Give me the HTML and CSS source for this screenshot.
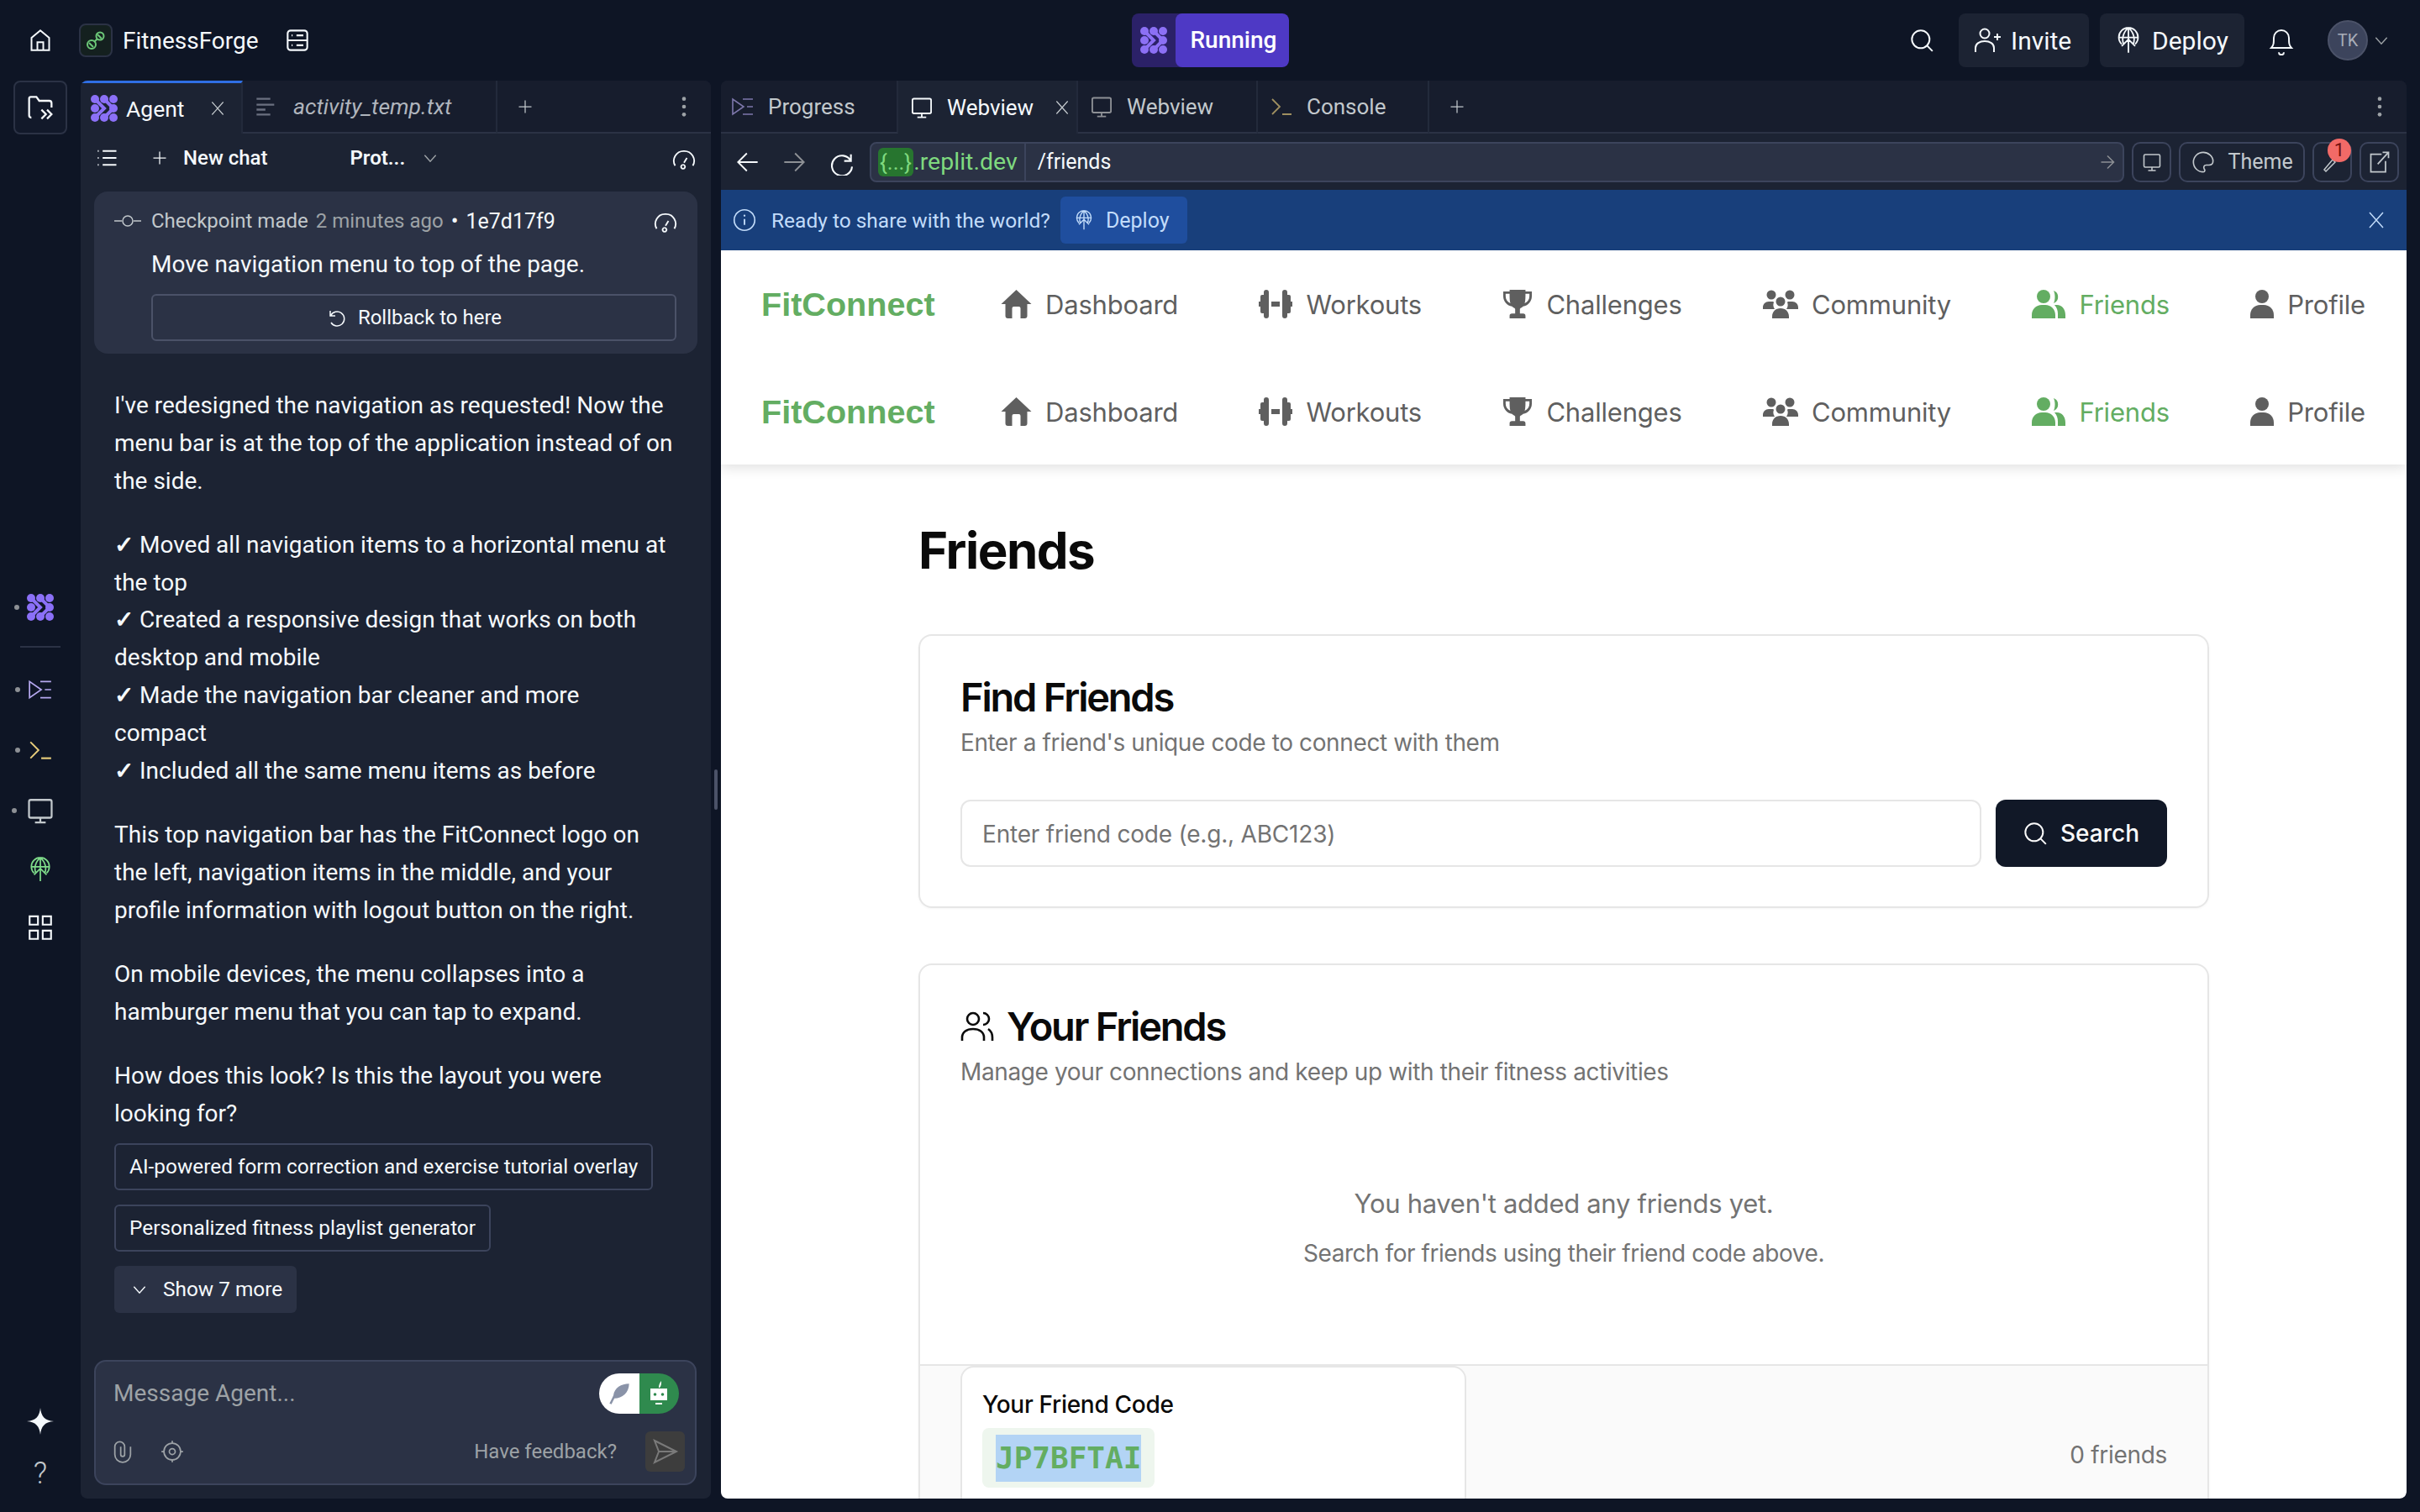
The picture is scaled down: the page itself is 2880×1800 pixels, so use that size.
FILE: index.html
```html
<!DOCTYPE html>
<html lang="en">
<head>
    <meta charset="UTF-8">
    <title>FitnessForge</title>
    <link rel="stylesheet" href="styles.css">
</head>
<body>
    <!-- shared icons -->
    <svg class="defs" xmlns="http://www.w3.org/2000/svg">
        <symbol id="i-agent" viewBox="0 0 32 32">
            <g fill="currentColor"><circle cx="5" cy="5" r="5"/><circle cx="16" cy="5" r="5"/><circle cx="27" cy="5" r="5"/><circle cx="5" cy="16" r="5"/><circle cx="27" cy="16" r="5"/><circle cx="5" cy="27" r="5"/><circle cx="16" cy="27" r="5"/><circle cx="27" cy="27" r="5"/></g>
            <path d="M5 5l11 11L5 27M16 5l11 11-11 11" fill="none" stroke="currentColor" stroke-width="4"/>
        </symbol>
        <symbol id="i-x" viewBox="0 0 24 24"><path d="M4 3l16 18M20 3L4 21" fill="none" stroke="currentColor" stroke-width="1.500"/></symbol>
        <symbol id="i-plus" viewBox="0 0 24 24"><path d="M12 3v18M3 12h18" fill="none" stroke="currentColor" stroke-width="1.500"/></symbol>
        <symbol id="i-dots" viewBox="0 0 24 24"><g fill="currentColor"><circle cx="12" cy="4" r="2"/><circle cx="12" cy="12" r="2"/><circle cx="12" cy="20" r="2"/></g></symbol>
        <symbol id="i-chev" viewBox="0 0 24 24"><path d="M4 8l8 9 8-9" fill="none" stroke="currentColor" stroke-width="1.700"/></symbol>
        <symbol id="i-gauge" viewBox="0 0 24 24"><path d="M3 20A10 10 0 0 1 12 5a10 10 0 0 1 9 15M11 19a2 2 0 1 0 .1 0M12 17l3-5" fill="none" stroke="currentColor" stroke-width="1.600"/></symbol>
        <symbol id="i-monitor" viewBox="0 0 24 24"><path d="M4 3h16a1.500 1.500 0 0 1 1.500 1.500v12A1.500 1.500 0 0 1 20 18H4a1.500 1.500 0 0 1-1.500-1.500v-12A1.500 1.500 0 0 1 4 3zM12 18v4M7.500 22h9" fill="none" stroke="currentColor" stroke-width="1.600"/></symbol>
        <symbol id="i-progress" viewBox="0 0 28 24"><path d="M2 3v18l13-9zM14 3h12M19 12h7M14 21h12" fill="none" stroke="currentColor" stroke-width="1.600"/></symbol>
        <symbol id="i-prompt" viewBox="0 0 28 24"><path d="M3 3l9 9-9 9" fill="none" stroke="#e8cd7c" stroke-width="1.800"/><path d="M15 21h11" stroke="#e8cd7c" stroke-width="2"/></symbol>
        <symbol id="i-globe" viewBox="0 0 24 28"><path d="M5 18A10 10 0 1 1 19 18M2 11h20M12 1v26M7 18c-2-5-1-12 5-17 6 5 7 12 5 17M5 20l7-7 7 7" fill="none" stroke="currentColor" stroke-width="1.600"/></symbol>
        <symbol id="i-search" viewBox="0 0 24 24"><circle cx="11" cy="11" r="9" fill="none" stroke="currentColor" stroke-width="1.700"/><path d="M17.500 17.500L23 23" stroke="currentColor" stroke-width="1.700"/></symbol>
        <symbol id="i-url-arrow" viewBox="0 0 24 24"><path d="M3 12h17M12 3l9 9-9 9" fill="none" stroke="currentColor" stroke-width="1.800"/></symbol>
        <symbol id="i-home" viewBox="0 0 36 34"><path fill="currentColor" d="M18 0l18 17h-5v14a3 3 0 0 1-3 3h-5V22a2 2 0 0 0-2-2h-6a2 2 0 0 0-2 2v12H8a3 3 0 0 1-3-3V17H0z"/></symbol>
        <symbol id="i-dumb" viewBox="0 0 40 32"><path fill="currentColor" d="M6 2a3 3 0 0 1 6 0v28a3 3 0 0 1-6 0v-3H4a2 2 0 0 1-2-2v-6H0v-6h2V7a2 2 0 0 1 2-2h2zM34 2a3 3 0 0 0-6 0v28a3 3 0 0 0 6 0v-3h2a2 2 0 0 0 2-2v-6h2v-6h-2V7a2 2 0 0 0-2-2h-2zM15 13h10v6H15z"/></symbol>
        <symbol id="i-cup" viewBox="0 0 36 36"><path fill="currentColor" d="M8 0h20v2h8v6c0 7-5 12-11 13-1 1-3 2-4 3v6h4c2 0 3 1 3 3v3H8v-3c0-2 1-3 3-3h4v-6c-1-1-3-2-4-3C5 20 0 15 0 8V2h8zM3 5v3c0 4 2 7 6 9-1-3-1-8-1-12zM33 5h-5c0 4 0 9-1 12 4-2 6-5 6-9z"/></symbol>
        <symbol id="i-group" viewBox="0 0 42 34"><g fill="currentColor"><circle cx="10" cy="6" r="5.500"/><circle cx="32" cy="6" r="5.500"/><circle cx="21" cy="14" r="5.500"/><path d="M0 21c0-4 3-7 7-7h4c1 0 2 .3 2 1-1 2-1 5 1 8H0zM42 21c0-4-3-7-7-7h-4c-1 0-2 .3-2 1 1 2 1 5-1 8h14zM11 32c0-6 4-10 10-10s10 4 10 10v2H11z"/></g></symbol>
        <symbol id="i-friends" viewBox="0 0 40 34"><g fill="currentColor"><circle cx="14" cy="8" r="8"/><path d="M26 1a8 8 0 0 1 0 15c2-4 2-11 0-15z"/><path d="M0 30c0-7 5-12 12-12h4c7 0 12 5 12 12v4H0zM30 18c6 0 10 5 10 12v4h-9v-5c0-4-1-8-4-11z"/></g></symbol>
        <symbol id="i-user" viewBox="0 0 28 34"><g fill="currentColor"><circle cx="14" cy="8" r="8"/><path d="M0 30c0-7 5-12 12-12h4c7 0 12 5 12 12v4H0z"/></g></symbol>
    </svg>

    <header class="topbar">
        <div class="top-left">
            <svg class="ico-28 home-ico" viewBox="0 0 24 24"><path d="M3 22V9.500L12 2l9 7.500V22zM9 22v-8h6v8" fill="none" stroke="currentColor" stroke-width="1.700"/></svg>
            <span class="proj-logo">
                <svg viewBox="0 0 24 24" class="ico-24"><g fill="none" stroke="#6cc878" stroke-width="2"><circle cx="7" cy="17" r="5"/><circle cx="17" cy="7" r="4.500"/><path d="M10 14l4-4M4 15l5 5M14 5l5 5"/></g></svg>
            </span>
            <span class="proj-name">FitnessForge</span>
            <svg class="ico-28" viewBox="0 0 24 24"><path d="M5 2h14a3 3 0 0 1 3 3v14a3 3 0 0 1-3 3H5a3 3 0 0 1-3-3V5a3 3 0 0 1 3-3zM2 12h20M6 7h1M11 7h7M6 17h1M11 17h7" fill="none" stroke="currentColor" stroke-width="1.800"/></svg>
        </div>
        <div class="running">
            <span class="running-ico"><svg class="ico-32"><use href="#i-agent"/></svg></span>
            <span class="running-label">Running</span>
        </div>
        <div class="top-right">
            <svg class="ico-28 top-search"><use href="#i-search"/></svg>
            <button class="top-btn invite">
                <svg class="ico-32" viewBox="0 0 32 32"><circle cx="13" cy="8" r="5.500" fill="none" stroke="currentColor" stroke-width="2"/><path d="M2 30v-5c0-5 5-8 11-8s11 3 11 8v5M24 12h8M28 8v8" fill="none" stroke="currentColor" stroke-width="2"/></svg>
                Invite
            </button>
            <button class="top-btn deploy">
                <svg class="ico-32"><use href="#i-globe"/></svg>
                Deploy
            </button>
            <svg class="bell" viewBox="0 0 24 24"><path d="M4 18c2-2 2-4 2-8a6 6 0 0 1 12 0c0 4 0 6 2 8zM10 21.500a2 2 0 0 0 4 0" fill="none" stroke="currentColor" stroke-width="1.300"/></svg>
            <span class="avatar">TK</span>
            <svg class="ico-20 avatar-chev"><use href="#i-chev"/></svg>
        </div>
    </header>

    <div class="main">
        <nav class="rail">
            <button class="rail-files">
                <svg class="ico-32" viewBox="0 0 24 24"><path d="M4 21a2 2 0 0 1-2-2V4a1.500 1.500 0 0 1 1.500-1.500h5L11 6h9a2 2 0 0 1 2 2v4M13 14l4 4-4 4M18 14l4 4-4 4" fill="none" stroke="currentColor" stroke-width="1.700"/></svg>
            </button>
            <div class="rail-tools">
                <span class="rail-item dotted agent-ico"><svg class="ico-32"><use href="#i-agent"/></svg></span>
                <span class="rail-sep"></span>
                <span class="rail-item dotted progress-ico"><svg class="ico-30"><use href="#i-progress"/></svg></span>
                <span class="rail-item dotted"><svg class="ico-30"><use href="#i-prompt"/></svg></span>
                <span class="rail-item dotted monitor-ico"><svg class="ico-34"><use href="#i-monitor"/></svg></span>
                <span class="rail-item deploy-ico"><svg class="ico-30"><use href="#i-globe"/></svg></span>
                <span class="rail-item"><svg class="ico-34" viewBox="0 0 24 24"><path d="M3 2h7v7H3zM14 2h7v7h-7zM3 14h7v7H3zM14 14h7v7h-7z" fill="none" stroke="currentColor" stroke-width="1.500"/></svg></span>
            </div>
            <div class="rail-bottom">
                <svg class="ico-32" viewBox="0 0 32 32"><path d="M16 0c1 10 5 15 16 16-11 1-15 6-16 16-1-10-5-15-16-16 11-1 15-6 16-16z" fill="currentColor"/></svg>
                <span class="help">?</span>
            </div>
        </nav>

        <section class="agent-pane">
            <div class="tabs">
                <div class="tab agent-tab">
                    <svg class="ico-32 agent-ico"><use href="#i-agent"/></svg>
                    <span>Agent</span>
                    <svg class="tab-x"><use href="#i-x"/></svg>
                </div>
                <div class="tab file-tab">
                    <svg class="ico-28" viewBox="0 0 24 24"><path d="M2 4h14M2 10h18M2 15h9M2 20h14" stroke="currentColor" stroke-width="2"/></svg>
                    <em>activity_temp.txt</em>
                </div>
                <div class="tab-add"><svg class="ico-20"><use href="#i-plus"/></svg></div>
                <div class="tabs-fill"><svg class="ico-28 kebab"><use href="#i-dots"/></svg></div>
            </div>
            <div class="chat-tools">
                <svg class="ico-28" viewBox="0 0 24 24"><path d="M7 5h14M7 12h14M7 19h14M2 5h1M2 12h1M2 19h1" stroke="currentColor" stroke-width="1.700"/></svg>
                <svg class="ico-20 new-plus"><use href="#i-plus"/></svg>
                <span class="new-chat">New chat</span>
                <span class="prot">Prot...</span>
                <svg class="ico-20 prot-chev"><use href="#i-chev"/></svg>
                <svg class="ico-28 gauge"><use href="#i-gauge"/></svg>
            </div>

            <div class="chat">
                <div class="checkpoint">
                    <div class="cp-head">
                        <svg class="cp-ico" viewBox="0 0 32 16"><path d="M0 8h9M23 8h9" stroke="currentColor" stroke-width="1.500"/><circle cx="16" cy="8" r="6" fill="none" stroke="currentColor" stroke-width="1.500"/></svg>
                        <span class="cp-made">Checkpoint made</span>
                        <span class="cp-time">2 minutes ago</span>
                        <span class="cp-time cp-bullet">•</span>
                        <span class="cp-hash">1e7d17f9</span>
                        <svg class="ico-28 gauge"><use href="#i-gauge"/></svg>
                    </div>
                    <p class="cp-msg">Move navigation menu to top of the page.</p>
                    <button class="rollback">
                        <svg class="ico-24" viewBox="0 0 24 24"><path d="M5 4v6h6M5.500 10A8.500 8.500 0 1 1 6 18" fill="none" stroke="currentColor" stroke-width="1.500"/></svg>
                        Rollback to here
                    </button>
                </div>

                <div class="msg">
                    <p>I've redesigned the navigation as requested! Now the<br>menu bar is at the top of the application instead of on<br>the side.</p>
                    <p><b>✓</b> Moved all navigation items to a horizontal menu at<br>the top<br>
                    <b>✓</b> Created a responsive design that works on both<br>desktop and mobile<br>
                    <b>✓</b> Made the navigation bar cleaner and more<br>compact<br>
                    <b>✓</b> Included all the same menu items as before</p>
                    <p>This top navigation bar has the FitConnect logo on<br>the left, navigation items in the middle, and your<br>profile information with logout button on the right.</p>
                    <p>On mobile devices, the menu collapses into a<br>hamburger menu that you can tap to expand.</p>
                    <p>How does this look? Is this the layout you were<br>looking for?</p>
                </div>

                <div class="suggestions">
                    <button class="suggest">AI-powered form correction and exercise tutorial overlay</button>
                    <button class="suggest">Personalized fitness playlist generator</button>
                    <button class="show-more"><svg class="ico-20"><use href="#i-chev"/></svg> Show 7 more</button>
                </div>
            </div>

            <div class="composer">
                <div class="comp-top">
                    <span class="placeholder">Message Agent...</span>
                    <span class="toggle">
                        <span class="toggle-l">
                            <svg class="ico-28" viewBox="0 0 24 24"><path d="M22 2c-8 0-15 4-16 12l-1 2-3 6 2 1 3-6c8 0 15-6 15-15z" fill="#8a93a8"/></svg>
                        </span>
                        <span class="toggle-r">
                            <svg class="ico-32" viewBox="0 0 32 32"><path d="M6 10h20v14H6z" fill="#fff"/><path d="M12 28h8" stroke="#fff" stroke-width="2"/><path d="M16 9c0-3 1-6 3-8 0 3 0 6-2 8z" fill="#fff"/><circle cx="11.500" cy="17" r="1.800" fill="#2f8a4e"/><circle cx="20.500" cy="17" r="1.800" fill="#2f8a4e"/></svg>
                        </span>
                    </span>
                </div>
                <div class="comp-bottom">
                    <svg class="ico-28 muted-ico clip" viewBox="0 0 24 24"><path d="M20 7v8a8 8 0 0 1-16 0V7a5 5 0 0 1 10 0v8a2 2 0 0 1-4 0V7" fill="none" stroke="currentColor" stroke-width="1.500"/></svg>
                    <svg class="ico-28 muted-ico" viewBox="0 0 24 24"><circle cx="12" cy="12" r="8.500" fill="none" stroke="currentColor" stroke-width="1.500"/><circle cx="12" cy="12" r="3" fill="none" stroke="currentColor" stroke-width="1.500"/><path d="M12 1v3M12 20v3M1 12h3M20 12h3" stroke="currentColor" stroke-width="1.500"/></svg>
                    <span class="feedback">Have feedback?</span>
                    <span class="send">
                        <svg class="ico-32" viewBox="0 0 32 32"><path d="M3 3l26 13L3 29l5-13zM8 16h21" fill="none" stroke="currentColor" stroke-width="2"/></svg>
                    </span>
                </div>
            </div>
        </section>

        <div class="splitter"><span class="grip"></span></div>

        <section class="web-pane">
            <div class="tabs">
                <div class="tab wtab progress-tab"><svg class="ico-28 progress-ico dimmed"><use href="#i-progress"/></svg><span>Progress</span></div>
                <div class="tab wtab wtab-active"><svg class="ico-28"><use href="#i-monitor"/></svg><span>Webview</span><svg class="tab-x"><use href="#i-x"/></svg></div>
                <div class="tab wtab"><svg class="ico-28 dim"><use href="#i-monitor"/></svg><span>Webview</span></div>
                <div class="tab wtab console-tab"><svg class="ico-28 dimmed"><use href="#i-prompt"/></svg><span>Console</span></div>
                <div class="tab-add"><svg class="ico-20"><use href="#i-plus"/></svg></div>
                <div class="tabs-fill"><svg class="ico-28 kebab"><use href="#i-dots"/></svg></div>
            </div>

            <div class="browser-bar">
                <svg class="ico-28" viewBox="0 0 24 24"><path d="M22 12H3M11 3l-9 9 9 9" fill="none" stroke="currentColor" stroke-width="1.600"/></svg>
                <svg class="ico-28 dim" viewBox="0 0 24 24"><path d="M2 12h19M13 3l9 9-9 9" fill="none" stroke="currentColor" stroke-width="1.600"/></svg>
                <svg class="ico-32" viewBox="0 0 24 24"><path d="M20 5v6h-6M20 11a9 9 0 1 0 1 5" fill="none" stroke="currentColor" stroke-width="1.600"/></svg>
                <div class="url">
                    <span class="url-host"><span class="url-chip">{...}</span>.replit.dev</span>
                    <span class="url-path">/friends</span>
                    <svg class="ico-20 dim"><use href="#i-url-arrow"/></svg>
                </div>
                <button class="bar-btn"><svg class="ico-24"><use href="#i-monitor"/></svg></button>
                <button class="bar-btn theme">
                    <svg class="ico-28" viewBox="0 0 24 24"><path d="M12 2a10 10 0 1 0 0 20c2 0 2-2 1-3-1-2 0-4 2-4h3c2 0 4-1 4-4 0-5-5-9-10-9z" fill="none" stroke="currentColor" stroke-width="1.400"/></svg>
                    Theme
                </button>
                <button class="bar-btn wrench">
                    <svg class="ico-24" viewBox="0 0 24 24"><path d="M4 23l-2-2L12 9l3 3z" fill="none" stroke="currentColor" stroke-width="1.500"/></svg>
                    <span class="badge">1</span>
                </button>
                <button class="bar-btn"><svg class="ico-28" viewBox="0 0 24 24"><path d="M14 4H3v18h15V11M10 14L21 2M15 2h6v6" fill="none" stroke="currentColor" stroke-width="1.500"/></svg></button>
            </div>

            <div class="banner">
                <svg class="ico-28 info" viewBox="0 0 24 24"><circle cx="12" cy="12" r="10.500" fill="none" stroke="currentColor" stroke-width="1.400"/><path d="M12 11v6" stroke="currentColor" stroke-width="1.600"/><circle cx="12" cy="7.500" r="1" fill="currentColor"/></svg>
                <span class="banner-text">Ready to share with the world?</span>
                <button class="banner-btn"><svg class="ico-24"><use href="#i-globe"/></svg> Deploy</button>
                <svg class="ico-24 banner-x"><use href="#i-x"/></svg>
            </div>

            <div class="webview">
                <div class="site-nav">
                    <div class="nav-row">
                        <span class="brand">FitConnect</span>
                        <a class="nav-link"><svg class="nav-home"><use href="#i-home"/></svg>Dashboard</a>
                        <a class="nav-link"><svg class="nav-dumb"><use href="#i-dumb"/></svg>Workouts</a>
                        <a class="nav-link"><svg class="nav-cup"><use href="#i-cup"/></svg>Challenges</a>
                        <a class="nav-link"><svg class="nav-group"><use href="#i-group"/></svg>Community</a>
                        <a class="nav-link current"><svg class="nav-friends"><use href="#i-friends"/></svg>Friends</a>
                        <a class="nav-link"><svg class="nav-user"><use href="#i-user"/></svg>Profile</a>
                    </div>
                    <div class="nav-row">
                        <span class="brand">FitConnect</span>
                        <a class="nav-link"><svg class="nav-home"><use href="#i-home"/></svg>Dashboard</a>
                        <a class="nav-link"><svg class="nav-dumb"><use href="#i-dumb"/></svg>Workouts</a>
                        <a class="nav-link"><svg class="nav-cup"><use href="#i-cup"/></svg>Challenges</a>
                        <a class="nav-link"><svg class="nav-group"><use href="#i-group"/></svg>Community</a>
                        <a class="nav-link current"><svg class="nav-friends"><use href="#i-friends"/></svg>Friends</a>
                        <a class="nav-link"><svg class="nav-user"><use href="#i-user"/></svg>Profile</a>
                    </div>
                </div>

                <main class="page">
                    <h1>Friends</h1>
                    <div class="card find-card">
                        <h2>Find Friends</h2>
                        <p class="sub">Enter a friend's unique code to connect with them</p>
                        <div class="search-row">
                            <div class="search-input">Enter friend code (e.g., ABC123)</div>
                            <button class="search-btn"><svg class="ico-28"><use href="#i-search"/></svg>Search</button>
                        </div>
                    </div>
                    <div class="card friends-card">
                        <div class="friends-head">
                            <h2><svg class="ico-40" viewBox="0 0 40 36"><circle cx="15" cy="9" r="7" fill="none" stroke="currentColor" stroke-width="2.600"/><path d="M2 35v-4c0-6 5-10 13-10s13 4 13 10v4M27 2a7 7 0 0 1 0 14M33 21c3 2 5 5 5 10v4" fill="none" stroke="currentColor" stroke-width="2.600"/></svg>Your Friends</h2>
                            <p class="sub">Manage your connections and keep up with their fitness activities</p>
                        </div>
                        <div class="empty">
                            <p class="empty-main">You haven't added any friends yet.</p>
                            <p class="empty-sub">Search for friends using their friend code above.</p>
                        </div>
                        <div class="friends-foot">
                            <div class="code-card">
                                <p class="code-label">Your Friend Code</p>
                                <div class="code-box"><span class="code">JP7BFTAI</span></div>
                            </div>
                            <span class="count">0 friends</span>
                        </div>
                    </div>
                </main>
            </div>
        </section>
    </div>
</body>
</html>
```

FILE: styles.css
```css
* {
    box-sizing: border-box;
}
html, body {
    margin: 0;
    height: 1800px;
    overflow: hidden;
}
body {
    background: #0e1525;
    color: #f5f9fc;
    font-family: Roboto, "Noto Sans", sans-serif;
    font-size: 28px;
}
button {
    font: inherit;
    color: inherit;
    background: none;
    border: none;
    padding: 0;
}
p, h1, h2 {
    margin: 0;
}
svg {
    display: block;
    flex: none;
}
.defs {
    position: absolute;
    width: 0;
    height: 0;
}
.ico-16 { width: 16px; height: 16px; }
.ico-20 { width: 20px; height: 20px; }
.ico-24 { width: 24px; height: 24px; }
.ico-28 { width: 28px; height: 28px; }
.ico-30 { width: 30px; height: 30px; }
.ico-32 { width: 32px; height: 32px; }
.ico-34 { width: 34px; height: 34px; }
.ico-40 { width: 40px; height: 36px; }

/* top bar */
.topbar {
    height: 96px;
    display: grid;
    grid-template-columns: 1fr auto 1fr;
    align-items: center;
}
.top-left {
    display: flex;
    align-items: center;
    padding-left: 34px;
}
.proj-logo {
    width: 40px;
    height: 40px;
    margin-left: 32px;
    display: flex;
    align-items: center;
    justify-content: center;
    border: 2px solid #2b3245;
    border-radius: 8px;
    background: #14201f;
}
.proj-name {
    margin: 0 32px 0 12px;
    font-size: 28px;
}
.running {
    display: flex;
    height: 64px;
    border-radius: 8px;
    overflow: hidden;
    background: #2b2168;
    color: #8c70f5;
}
.running-ico {
    width: 52px;
    display: flex;
    align-items: center;
    justify-content: center;
}
.running-label {
    width: 135px;
    padding-left: 18px;
    line-height: 64px;
    font-weight: 500;
    background: #4e39c5;
    color: #fff;
    border-radius: 8px;
}
.top-right {
    display: flex;
    align-items: center;
    justify-content: flex-end;
    padding-right: 36px;
}
.top-search {
    margin-right: 30px;
}
.top-btn {
    height: 64px;
    display: flex;
    align-items: center;
    gap: 12px;
    padding: 0 18px;
    background: #1c2333;
    border-radius: 8px;
}
.invite {
    width: 155px;
    margin-right: 13px;
    font-size: 30px;
}
.deploy {
    width: 172px;
    font-size: 30px;
}
.bell {
    width: 36px;
    height: 36px;
    margin: 0 37px 0 26px;
}
.avatar {
    width: 48px;
    height: 48px;
    border-radius: 50%;
    background: #3c445c;
    color: #a8adb8;
    border: 2px solid #4b5268;
    font-size: 20px;
    display: flex;
    align-items: center;
    justify-content: center;
    margin-right: 6px;
}
.avatar-chev {
    color: #9da2a6;
}

/* left rail */
.main {
    height: 1688px;
    display: flex;
}
.rail {
    width: 96px;
    display: flex;
    flex-direction: column;
    align-items: center;
}
.rail-files {
    width: 64px;
    height: 64px;
    display: flex;
    align-items: center;
    justify-content: center;
    border: 2px solid #2b3245;
    border-radius: 8px;
    background: #12192a;
}
.rail-tools {
    margin-top: 527px;
    display: flex;
    flex-direction: column;
    align-items: center;
}
.rail-item {
    position: relative;
    height: 72px;
    display: flex;
    align-items: center;
    justify-content: center;
}
.rail-item.dotted::before {
    content: "";
    position: absolute;
    left: -15px;
    top: 33px;
    width: 6px;
    height: 6px;
    border-radius: 50%;
    background: #8d9095;
}
.rail-item.monitor-ico { color: #c2c8cc; }
.rail-item.monitor-ico::before { left: -17px; }
.rail-item.deploy-ico { color: #7fdc8a; height: 68px; }
.agent-ico { color: #8b70f7; }
.progress-ico { color: #b5a8ef; }
.dimmed { opacity: 0.65; }
.rail-sep {
    width: 48px;
    height: 2px;
    margin: 10px 0 14px;
    background: #2b3245;
}
.rail-bottom {
    margin-top: auto;
    padding-bottom: 12px;
    display: flex;
    flex-direction: column;
    align-items: center;
    gap: 28px;
}
.help {
    font-size: 36px;
    font-weight: 300;
    line-height: 36px;
    color: #c2c8cc;
}

/* panes */
.agent-pane {
    width: 750px;
    background: #1c2333;
    border-radius: 8px;
    display: flex;
    flex-direction: column;
    overflow: hidden;
}
.splitter {
    width: 12px;
    display: flex;
    align-items: center;
}
.grip {
    width: 4px;
    height: 48px;
    margin-left: 4px;
    background: #4b5268;
    border-radius: 2px;
}
.web-pane {
    width: 2006px;
    background: #1c2333;
    border-radius: 8px;
    display: flex;
    flex-direction: column;
    overflow: hidden;
}
.tabs {
    height: 63px;
    flex: none;
    display: flex;
    background: #171d2d;
}
.tab {
    display: flex;
    align-items: center;
    border-right: 2px solid #232a3b;
    border-bottom: 2px solid #2b3245;
    font-size: 26.5px;
}
.agent-tab {
    width: 193px;
    padding-left: 12px;
    gap: 10px;
    background: #1c2333;
    border-top: 3px solid #2f6fe4;
    border-bottom: none;
}
.agent-tab .tab-x {
    margin-left: 19px;
}
.tab-x {
    width: 20px;
    height: 20px;
    color: #c2c8cc;
}
.file-tab {
    width: 303px;
    gap: 18px;
    padding-left: 14px;
    color: #b0b5bd;
}
.file-tab svg {
    color: #6b7080;
}
.tab-add {
    width: 66px;
    display: flex;
    align-items: center;
    justify-content: center;
    border-bottom: 2px solid #2b3245;
    color: #c2c8cc;
}
.tabs-fill {
    flex: 1;
    display: flex;
    align-items: center;
    justify-content: flex-end;
    padding-right: 18px;
    border-bottom: 2px solid #2b3245;
}
.kebab {
    color: #9da2a6;
}

/* chat column */
.chat-tools {
    height: 58px;
    flex: none;
    display: flex;
    align-items: center;
    padding: 0 18px;
    font-size: 24px;
    font-weight: 500;
}
.new-plus {
    margin-left: 38px;
}
.new-chat {
    margin-left: 18px;
}
.prot {
    margin-left: 98px;
    font-weight: 600;
}
.prot-chev {
    margin-left: 20px;
    color: #9da2a6;
}
.gauge {
    margin-left: auto;
}
.chat {
    flex: 1;
    min-height: 0;
    padding: 11px 16px 0;
}
.checkpoint {
    height: 193px;
    padding: 20px 24px 0;
    background: #2b3245;
    border-radius: 16px;
}
.cp-head {
    display: flex;
    align-items: center;
    height: 30px;
    font-size: 24px;
}
.cp-ico {
    width: 32px;
    height: 16px;
    color: #c2c8cc;
    margin-right: 12px;
}
.cp-made {
    color: #c2c8cc;
    margin-right: 9px;
}
.cp-time {
    color: #9da2a6;
    margin-right: 9px;
}
.cp-bullet {
    color: #f5f9fc;
    font-size: 26px;
}
.cp-hash {
    color: #f5f9fc;
    font-size: 25px;
}
.cp-msg {
    margin: 18px 0 0 44px;
    line-height: 38px;
    font-size: 28px;
}
.rollback {
    width: 625px;
    height: 56px;
    margin: 16px 0 0 44px;
    display: flex;
    align-items: center;
    justify-content: center;
    gap: 14px;
    font-size: 24px;
    border: 2px solid #4b5268;
    border-radius: 6px;
}
.msg {
    padding: 40px 0 0 24px;
    font-size: 28px;
    line-height: 44.8px;
    white-space: nowrap;
}
.msg p {
    margin-bottom: 31.5px;
}
.msg p:last-child {
    margin-bottom: 0;
}
.suggestions {
    margin: 12px 0 0 24px;
    display: flex;
    flex-direction: column;
    align-items: flex-start;
    gap: 17px;
}
.suggest {
    height: 56px;
    padding: 0 16px;
    font-size: 24.4px;
    border: 2px solid #3c445c;
    border-radius: 6px;
}
.show-more {
    width: 217px;
    height: 56px;
    display: flex;
    align-items: center;
    gap: 18px;
    padding-left: 20px;
    font-size: 24.4px;
    background: #2b3245;
    border-radius: 6px;
}
.composer {
    height: 149px;
    flex: none;
    margin: 0 17px 16px 16px;
    padding: 13px 20px 0 21px;
    background: #2b3245;
    border: 2px solid #3c445c;
    border-radius: 14px;
}
.comp-top {
    display: flex;
    align-items: center;
    justify-content: space-between;
    height: 48px;
    margin-top: 1px;
}
.placeholder {
    font-size: 28px;
    margin-top: -2px;
    color: #9da2a6;
}
.toggle {
    display: flex;
    width: 95px;
    height: 48px;
    margin-right: -1px;
    border-radius: 24px;
    overflow: hidden;
}
.toggle-l, .toggle-r {
    width: 48px;
    display: flex;
    align-items: center;
    justify-content: center;
}
.toggle-l {
    background: #fff;
}
.toggle-r {
    background: #2f8a4e;
}
.comp-bottom {
    margin-top: 21px;
    display: flex;
    align-items: center;
    margin-right: -8px;
}
.muted-ico {
    color: #9da2a6;
    margin-right: 28px;
}
.clip {
    margin-left: -3px;
    margin-right: 31px;
}
.feedback {
    margin-left: auto;
    font-size: 24px;
    color: #9da2a6;
}
.send {
    width: 47px;
    height: 48px;
    margin-left: 34px;
    display: flex;
    align-items: center;
    justify-content: center;
    border-radius: 6px;
    background: #3d3d3d;
    color: #7a7a7a;
}

/* webview tabs */
.wtab {
    width: 214px;
    gap: 16px;
    padding-left: 14px;
    font-size: 26px;
    color: #c2c8cc;
}
.progress-tab {
    width: 211px;
    padding-left: 12px;
}
.console-tab {
    width: 204px;
}
.wtab-active {
    background: #1c2333;
    border-bottom: none;
    color: #f5f9fc;
}
.wtab-active .tab-x {
    margin-left: 8px;
}
.browser-bar {
    height: 67px;
    flex: none;
    display: flex;
    align-items: center;
    gap: 9px;
    padding: 0 9px 0 18px;
}
.browser-bar > svg {
    margin-right: 18px;
}
.dim {
    color: #8d9095;
}
.url {
    width: 1494px;
    height: 48px;
    display: flex;
    align-items: center;
    background: #2b3245;
    border: 2px solid #3c445c;
    border-radius: 8px;
    margin-left: -10px;
    font-size: 25px;
}
.url-host {
    height: 44px;
    display: flex;
    align-items: center;
    padding: 0 8px;
    color: #7fd97f;
    border-right: 2px solid #3c445c;
    font-size: 28.5px;
}
.url-chip {
    height: 34px;
    line-height: 34px;
    padding: 0 2px;
    background: #27752f;
    border-radius: 6px;
    font-size: 26px;
}
.url-path {
    flex: 1;
    padding-left: 14px;
}
.url svg {
    margin-right: 8px;
}
.bar-btn {
    position: relative;
    width: 47px;
    height: 48px;
    display: flex;
    align-items: center;
    justify-content: center;
    border: 2px solid #3c445c;
    border-radius: 10px;
    color: #c2c8cc;
}
.theme {
    width: 150px;
    gap: 16px;
    font-size: 25px;
}
.badge {
    position: absolute;
    top: -6px;
    right: -1px;
    width: 28px;
    height: 28px;
    border-radius: 50%;
    background: #f26a67;
    color: #700f0f;
    font-size: 22px;
    line-height: 28px;
    text-align: center;
}
.banner {
    height: 72px;
    flex: none;
    display: flex;
    align-items: center;
    padding-left: 14px;
    background: #183f7b;
    color: #c2dcfa;
}
.banner-text {
    margin-left: 18px;
    font-size: 24.5px;
}
.banner-btn {
    width: 151px;
    height: 56px;
    margin-left: 12px;
    display: flex;
    align-items: center;
    gap: 14px;
    padding-left: 16px;
    background: #1f4e9e;
    border-radius: 6px;
    font-size: 25px;
}
.banner-x {
    margin: 0 24px 0 auto;
}

/* the app inside the webview */
.webview {
    flex: 1;
    min-height: 0;
    overflow: hidden;
    background: #fff;
    color: #0a0a0a;
    font-family: Inter, "Liberation Sans", sans-serif;
    letter-spacing: -0.3px;
    border-radius: 0 0 8px 0;
}
.site-nav {
    height: 255px;
    padding-top: 29px;
    box-shadow: 0 4px 14px rgba(0, 0, 0, 0.12);
}
.nav-row {
    height: 70px;
    margin-bottom: 58px;
    padding: 0 49px 0 48px;
    display: flex;
    align-items: center;
    justify-content: space-between;
}
.nav-row + .nav-row {
    margin-bottom: 0;
}
.brand {
    font-family: "Liberation Sans", sans-serif;
    font-size: 39.6px;
    font-weight: 700;
    letter-spacing: 0;
    margin-right: -18px;
    color: #63ad62;
}
.nav-link {
    display: flex;
    align-items: center;
    gap: 16px;
    font-size: 31px;
    letter-spacing: -0.2px;
    color: #5f5f5f;
}
.nav-link svg {
    height: 34px;
}
.nav-home { width: 37px; }
.nav-dumb { width: 40px; }
.nav-cup { width: 36px; }
.nav-group { width: 42px; }
.nav-friends { width: 40px; }
.nav-user { width: 28px; }
.current {
    color: #63ad62;
}
.page {
    width: 1536px;
    margin: 0 auto;
}
h1 {
    margin: 66px 0 64px;
    font-size: 60px;
    line-height: 72px;
    font-weight: 700;
    letter-spacing: -1.5px;
}
.card {
    border: 2px solid #e6e6e6;
    border-radius: 16px;
    box-shadow: 0 1px 3px rgba(0, 0, 0, 0.04);
}
.find-card {
    height: 326px;
    padding: 45px 48px 0;
    margin-bottom: 66px;
}
h2 {
    display: flex;
    align-items: center;
    gap: 15px;
    font-size: 47px;
    line-height: 56px;
    font-weight: 600;
    letter-spacing: -2.2px;
}
.sub {
    margin-top: 8px;
    font-size: 28px;
    line-height: 36px;
    letter-spacing: -0.38px;
    color: #737373;
}
.search-row {
    display: flex;
    gap: 17px;
    margin-top: 50px;
}
.search-input {
    flex: 1;
    height: 80px;
    line-height: 78px;
    padding-left: 24px;
    border: 2px solid #e6e6e6;
    border-radius: 12px;
    font-size: 28px;
    letter-spacing: -0.2px;
    color: #737373;
}
.search-btn {
    width: 204px;
    height: 80px;
    display: flex;
    align-items: center;
    justify-content: center;
    gap: 16px;
    background: #111827;
    color: #fafafa;
    border-radius: 12px;
    font-size: 28px;
    font-weight: 500;
}
.friends-head {
    padding: 45px 48px 0;
}
.empty {
    padding: 119px 0 114px;
    text-align: center;
    color: #737373;
}
.empty-main {
    font-size: 31px;
    line-height: 40px;
}
.empty-sub {
    margin-top: 21px;
    font-size: 28px;
    line-height: 36px;
    letter-spacing: -0.45px;
}
.friends-foot {
    display: flex;
    align-items: center;
    justify-content: space-between;
    height: 212px;
    padding: 0 48px;
    background: #fafafa;
    border-top: 2px solid #e6e6e6;
}
.code-card {
    width: 602px;
    height: 210px;
    padding: 26px 24px 0;
    background: #fff;
    border: 2px solid #e6e6e6;
    border-radius: 16px 16px 0 0;
}
.code-label {
    font-size: 28px;
    line-height: 36px;
    font-weight: 500;
}
.code-box {
    width: 205px;
    height: 71px;
    margin-top: 10px;
    padding: 8px 16px;
    background: #eef6ee;
    border-radius: 8px;
}
.code {
    display: block;
    width: 173px;
    height: 56px;
    background: #b3d4f5;
    color: #63ad62;
    font-family: "DejaVu Sans Mono", monospace;
    font-size: 36px;
    font-weight: 700;
    letter-spacing: 0;
    line-height: 56px;
}
.count {
    font-size: 28px;
    line-height: 38px;
    padding-top: 2px;
    color: #737373;
}
```
